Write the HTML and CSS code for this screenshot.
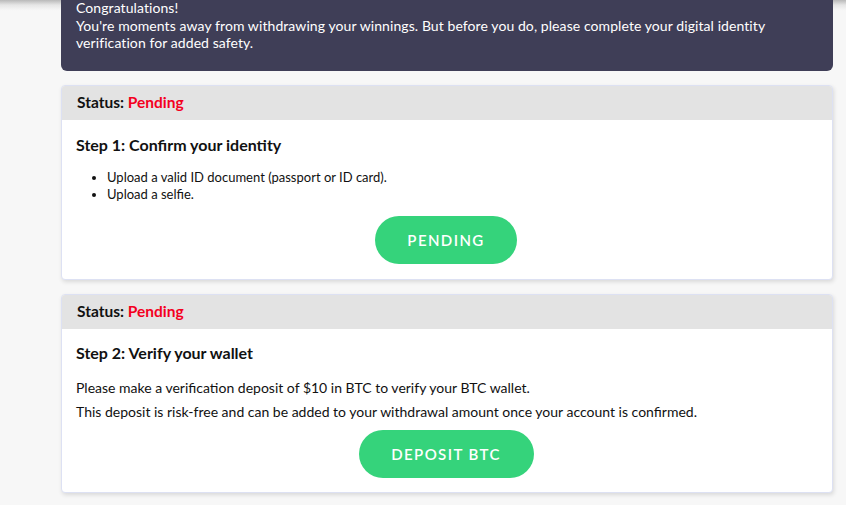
FILE: index.html
```html
<!DOCTYPE html>
<html lang="en">
<head>
<meta charset="utf-8">
<title>Verification</title>
<link rel="stylesheet" href="styles.css">
</head>
<body>
<main class="page">
  <section class="banner">
    <p>Congratulations!<br>You're moments away from withdrawing your winnings. But before you do, please complete your digital identity verification for added safety.</p>
  </section>

  <section class="card">
    <div class="card-head">Status: <span class="pending">Pending</span></div>
    <div class="card-body body-1">
      <h3 class="step-title">Step 1: Confirm your identity</h3>
      <ul class="list">
        <li>Upload a valid ID document (passport or ID card).</li>
        <li>Upload a selfie.</li>
      </ul>
      <div class="actions actions-1"><button class="btn">PENDING</button></div>
    </div>
  </section>

  <section class="card">
    <div class="card-head">Status: <span class="pending">Pending</span></div>
    <div class="card-body body-2">
      <h3 class="step-title">Step 2: Verify your wallet</h3>
      <p class="text t1">Please make a verification deposit of $10 in BTC to verify your BTC wallet.</p>
      <p class="text t2">This deposit is risk-free and can be added to your withdrawal amount once your account is confirmed.</p>
      <div class="actions actions-2"><button class="btn btn-deposit">DEPOSIT BTC</button></div>
    </div>
  </section>
</main>
</body>
</html>
```

FILE: styles.css
```css
html, body {
  margin: 0;
  padding: 0;
}
body {
  background: linear-gradient(to bottom, #b9b9b9 0px, #e6e6e6 5px, #f6f6f6 10px, #f7f7f7 12px) no-repeat, #f7f7f7;
  font-family: Lato, "Open Sans", sans-serif;
  color: #111;
  height: 505px;
  overflow: hidden;
}
.page {
  width: 772px;
  margin: 0 0 0 61px;
  display: flex;
  flex-direction: column;
  gap: 14px;
}
.banner {
  background: #3f3e57;
  color: #fff;
  border-radius: 0 0 6px 6px;
  padding: 0 15px 19.5px 15px;
  margin-top: -1px;
}
.banner p {
  margin: 0;
  font-size: 14px;
  line-height: 17.5px;
  letter-spacing: 0.08px;
}
.card {
  background: #fff;
  border: 1px solid #dde1f3;
  border-radius: 4px;
  box-shadow: 1px 2px 4px rgba(0, 0, 0, 0.12);
  overflow: hidden;
}
.card-head {
  background: #e3e3e3;
  height: 34px;
  line-height: 33px;
  padding: 0 15px;
  font-size: 15.5px;
  font-weight: 700;
  color: #111;
}
.pending {
  color: #f4001f;
  font-weight: 700;
}
.card-body {
  padding: 15px 14px 15px 14px;
}
.body-1 {
  padding-top: 16px;
}
.body-2 {
  padding-bottom: 14px;
}
.step-title {
  margin: 0;
  font-size: 16px;
  line-height: 18px;
  font-weight: 700;
  color: #111;
}
.list {
  margin: 15px 0 0 0;
  padding: 0 0 0 31px;
  font-size: 13px;
  line-height: 17px;
}
.text {
  margin: 0;
  font-size: 14px;
  line-height: 17px;
}
.t1 { margin-top: 17px; }
.t2 { margin-top: 7px; }
.actions {
  display: flex;
  justify-content: center;
}
.actions-1 { margin-top: 13px; }
.actions-2 { margin-top: 10px; }
.btn {
  border: none;
  background: #35d37b;
  color: #fff;
  font-family: Lato, "Open Sans", sans-serif;
  font-size: 15px;
  font-weight: 600;
  letter-spacing: 1.4px;
  width: 142px;
  height: 48px;
  border-radius: 24px;
  margin-left: -2px;
  cursor: pointer;
}
.btn-deposit {
  width: 175px;
}
```
